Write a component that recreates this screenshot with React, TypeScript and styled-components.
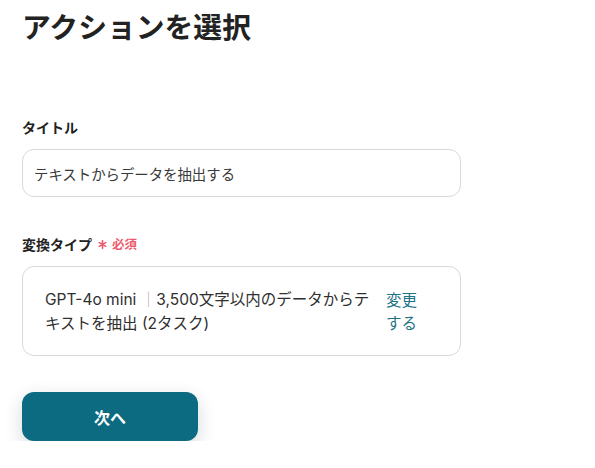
import React from "react";
import styled, { createGlobalStyle } from "styled-components";

const Global = createGlobalStyle`
  html, body { margin: 0; padding: 0; background: #ffffff; }
  body {
    font-family: "Noto Sans CJK JP", "Noto Sans", sans-serif;
    color: #2b2b2b;
  }
`;

const Page = styled.div`
  padding: 6px 0 0 22px;
  width: 439px;
  display: flex;
  flex-direction: column;
`;

const Heading = styled.h1`
  margin: 0;
  font-size: 28.8px;
  line-height: 40px;
  font-weight: 700;
  color: #222;
`;

const Field = styled.div<{ $top: number }>`
  display: flex;
  flex-direction: column;
  gap: 12px;
  margin-top: ${(p) => p.$top}px;
`;

const Label = styled.div`
  display: flex;
  align-items: center;
  gap: 6px;
  font-size: 14px;
  line-height: 20px;
  font-weight: 700;
  color: #222;
`;

const Required = styled.span`
  color: #ec5a6e;
  font-size: 12.5px;
  font-weight: 700;
  display: flex;
  align-items: center;
  gap: 5px;
`;

const Input = styled.div`
  box-sizing: border-box;
  height: 48px;
  border: 1px solid #d6d9dd;
  border-radius: 12px;
  padding: 0 11px;
  display: flex;
  align-items: center;
  font-size: 14.4px;
  color: #3a3a3a;
`;

const SelectBox = styled.div`
  box-sizing: border-box;
  height: 90px;
  border: 1px solid #d6d9dd;
  border-radius: 12px;
  padding: 0 41px 0 22px;
  display: flex;
  align-items: center;
  gap: 9px;
`;

const SelectText = styled.div`
  flex: 1;
  font-family: Inter, "Noto Sans CJK JP", sans-serif;
  font-size: 15.5px;
  line-height: 23.5px;
  color: #2f2f2f;
`;

const Bar = styled.span`
  font-family: "Noto Sans CJK JP", sans-serif;
  color: #b9a9ae;
`;

const ChangeLink = styled.span`
  width: 33px;
  font-size: 15.5px;
  line-height: 23.5px;
  color: #1f7386;
`;

const Next = styled.button`
  margin-top: 36px;
  width: 176px;
  height: 49px;
  border: none;
  border-radius: 12px;
  background: #0c6a81;
  color: #fff;
  font-family: inherit;
  font-size: 16px;
  font-weight: 700;
  box-shadow: 0 6px 18px rgba(20, 40, 60, 0.18);
  cursor: pointer;
`;

const Asterisk = () => (
  <svg width="9" height="9" viewBox="0 0 10 10" aria-hidden="true">
    <g stroke="#ec5a6e" strokeWidth="1.8" strokeLinecap="round">
      <line x1="5" y1="0.8" x2="5" y2="9.2" />
      <line x1="1.4" y1="2.9" x2="8.6" y2="7.1" />
      <line x1="1.4" y1="7.1" x2="8.6" y2="2.9" />
    </g>
  </svg>
);

export default function App() {
  return (
    <>
      <Global />
      <Page>
        <Heading>アクションを選択</Heading>
        <Field $top={71}>
          <Label>タイトル</Label>
          <Input>テキストからデータを抽出する</Input>
        </Field>
        <Field $top={37}>
          <Label>
            変換タイプ
            <Required>
              <Asterisk />
              必須
            </Required>
          </Label>
          <SelectBox>
            <SelectText>
              GPT-4o mini <Bar>｜</Bar>3,500文字以内のデータからテキストを抽出 (2タスク)
            </SelectText>
            <ChangeLink>変更する</ChangeLink>
          </SelectBox>
        </Field>
        <div>
          <Next>次へ</Next>
        </div>
      </Page>
    </>
  );
}
